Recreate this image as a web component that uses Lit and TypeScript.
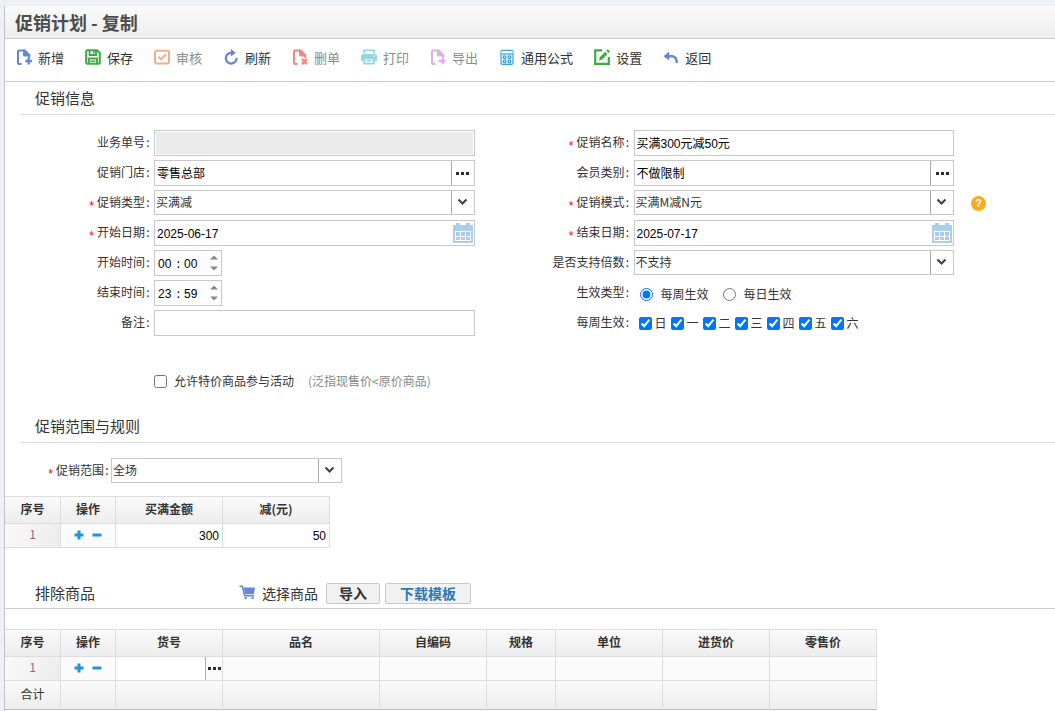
import { LitElement, html, css, svg, nothing, TemplateResult } from "lit";
import { customElement, state } from "lit/decorators.js";
import { classMap } from "lit/directives/class-map.js";

interface Tool {
  text: string;
  icon: TemplateResult;
  color: string;
  off?: boolean;
}

const page = svg`<path d="M5.5 15H3Q2 15 2 14V2.5Q2 1.5 3 1.5H8L13.2 6.5V9" fill="none" stroke="currentColor" stroke-width="2"/><path d="M7 .5H9.2L14.2 5.4V7.4H8.4Q7 7.4 7 6Z"/>`;

const icons = {
  add: svg`${page}<path d="M11.4 8.6H13.8V10.8H16V13.2H13.8V15.4H11.4V13.2H9.2V10.8H11.4Z"/>`,
  save: svg`<path d="M1.2 2.4Q1.2 1.2 2.4 1.2H12L14.8 4V13.6Q14.8 14.8 13.6 14.8H2.4Q1.2 14.8 1.2 13.6Z" fill="none" stroke="currentColor" stroke-width="2.1"/><path d="M4.6 1V6H11V1M4 15V9.5H12V15" fill="none" stroke="currentColor" stroke-width="1.9"/><path d="M8 2H9.6V4.6H8ZM5.5 11.6H10.5V13H5.5Z"/>`,
  audit: svg`<rect x="1" y="1.8" width="14" height="12.6" rx="1.4" fill="none" stroke="currentColor" stroke-width="2"/><path d="M4.4 7.8L7 10.4L12 5.2" fill="none" stroke="currentColor" stroke-width="2"/>`,
  refresh: svg`<path d="M9.5 3.8H8A5.4 5.4 0 1 0 13.6 9" fill="none" stroke="currentColor" stroke-width="2.2"/><path d="M8 0L12.8 3.8L8 7.6Z"/>`,
  remove: svg`${page}<path d="M10 10.2L15 15.2M15 10.2L10 15.2" stroke="currentColor" stroke-width="2.4"/>`,
  print: svg`<path d="M2 .5H14V4.5H12.2V2.2H3.8V4.5H2Z"/><path fill-rule="evenodd" d="M2 5H14Q16 5 16 7V12H13.6V9.5H2.4V12H0V7Q0 5 2 5ZM12.4 6.4V7.8H13.8V6.4Z"/><path d="M3.2 9.2V14.6H12.8V9.2Z" fill="none" stroke="currentColor" stroke-width="1.9"/><path d="M5.5 11H10.5V12.6H5.5Z"/>`,
  export: svg`${page}<path d="M8.5 10.8H11.8V8L16 12L11.8 16V13.2H8.5Z"/>`,
  formula: svg`<rect x="2" y="1.4" width="12" height="14" rx="1.4" fill="#dff2fc" stroke="currentColor" stroke-width="1.2"/><path d="M2.6 2.2H13.4V4.2H2.6Z" fill="#fff"/><path d="M2.6 5H13.4" stroke="currentColor" stroke-width="1.2"/><g fill="#fff" stroke="currentColor" stroke-width="1.3"><circle cx="5.6" cy="8.2" r="1.3"/><circle cx="10.4" cy="8.2" r="1.3"/><circle cx="5.6" cy="12.4" r="1.3"/><circle cx="10.4" cy="12.4" r="1.3"/></g>`,
  setup: svg`<path d="M8.2 1.4H1.2V14.8H14.8V8" fill="none" stroke="currentColor" stroke-width="2.2"/><path d="M5 11.6L5.8 8.2L11.2 2.8L13.4 5L8.2 10.6Z"/><path d="M12.2 1.8L13.8 .2L16 2.4L14.4 4Z"/>`,
  back: svg`<path d="M5 7.2H9.4Q13.6 7.6 13.8 14" fill="none" stroke="currentColor" stroke-width="2.4"/><path d="M.5 7.2L6.2 2.6V11.6Z"/>`,
  cart: svg`<path d="M.5 1.3H3.4L5.6 10.6H15" fill="none" stroke="currentColor" stroke-width="1.6"/><path d="M4.6 2.4H16L14.8 9H6.2Z"/><path d="M5.6 12H7.8V14H5.6ZM12.4 12H14.6V14H12.4Z"/>`,
};

const tools: Tool[] = [
  { text: "新增", icon: icons.add, color: "blue" },
  { text: "保存", icon: icons.save, color: "green" },
  { text: "审核", icon: icons.audit, color: "orange", off: true },
  { text: "刷新", icon: icons.refresh, color: "blue" },
  { text: "删单", icon: icons.remove, color: "red", off: true },
  { text: "打印", icon: icons.print, color: "cyan", off: true },
  { text: "导出", icon: icons.export, color: "violet", off: true },
  { text: "通用公式", icon: icons.formula, color: "sky" },
  { text: "设置", icon: icons.setup, color: "green" },
  { text: "返回", icon: icons.back, color: "blue" },
];

const glyph = (body: unknown, color = "") =>
  html`<svg class="glyph ${color}" viewBox="0 0 16 16" fill="currentColor" aria-hidden="true">${body}</svg>`;

const calendar = html`<svg class="calendar" viewBox="0 0 20 20" aria-hidden="true">
  <path fill="#abcfea" d="M0 2H3V0H7V2H13V0H17V2H20V20H0Z" />
  <path fill="#fff" d="M2 8H18V18H2Z" />
  <path fill="#abcbe6" d="M3 9h4v4H3zM8 9h4v4H8zM13 9h4v4h-4zM3 14h4v3H3zM8 14h4v3H8zM13 14h4v3h-4z" />
</svg>`;

const dots = html`<svg class="dots" viewBox="0 0 13 3" aria-hidden="true">
  <path fill="#2f2a3a" d="M0 0h3v3H0zM5 0h3v3H5zM10 0h3v3h-3z" />
</svg>`;

@customElement("app-root")
export class AppRoot extends LitElement {
  @state() private cycle = "week";

  static styles = css`
    :host {
      display: block;
      box-sizing: border-box;
      min-height: 100vh;
      padding: 6px 0 0 4px;
      background: #eff0f5;
      color: #333;
      font: 12px/16px "Noto Sans CJK SC", sans-serif;
    }
    *, *::before { box-sizing: border-box; }
    button, input, select { font: inherit; color: inherit; margin: 0; }
    button { padding: 0; border: 0; background: none; cursor: pointer; }
    svg { display: block; }
    .panel {
      min-height: calc(100vh - 6px);
      border-left: 1px solid #c4c4c4;
      background: #fff;
    }
    .titlebar {
      padding: 4px 10px;
      border-bottom: 1px solid #ccc;
      background: linear-gradient(#fafafa, #ededed);
    }
    h1 { margin: 0; font-size: 18px; line-height: 24px; color: #4d4d4d; }
    .toolbar {
      display: flex;
      flex-wrap: wrap;
      gap: 0 21px;
      padding: 8px 11px 13px;
      border-bottom: 1px solid #ccc;
    }
    .tool {
      display: flex;
      align-items: flex-start;
      gap: 6px;
      font-size: 13px;
      line-height: 21px;
    }
    .tool .glyph { margin-top: 2px; }
    .tool.off { color: #8c8c8c; }
    .glyph { width: 16px; height: 16px; flex: none; }
    .blue { color: #6787d6; }
    .green { color: #3fa945; }
    .orange { color: #f5ae84; }
    .red { color: #f18686; }
    .cyan { color: #93d6df; }
    .violet { color: #dfaee6; }
    .tool .sky { color: #3ea3dc; }
    h2 { margin: 0; font-size: 15px; line-height: 20px; font-weight: 400; }
    .section {
      margin-left: 15px;
      padding: 6px 15px;
      border-bottom: 1px solid #ddd;
    }
    .form {
      display: grid;
      grid-template-columns: 149px 1fr 159px 1fr 101px;
      grid-auto-rows: 26px;
      gap: 4px 0;
      padding-top: 15px;
    }
    .label {
      padding-right: 3px;
      text-align: right;
      line-height: 24px;
      white-space: nowrap;
    }
    .mark { display: inline-block; width: 6px; text-align: center; }
    .star {
      display: inline-block;
      height: 20px;
      margin-right: 3px;
      color: #f00;
      font-family: "Liberation Sans", sans-serif;
      vertical-align: middle;
    }
    .box {
      display: flex;
      height: 26px;
      border: 1px solid #c8c8c8;
      background: #fff;
    }
    .box input {
      flex: 1;
      width: 0;
      min-width: 0;
      padding: 2px 2px 0;
      border: 0;
      outline: 0;
      background: none;
      color: #000;
      font-family: "Liberation Sans", "Noto Sans CJK SC", sans-serif;
    }
    .box input:disabled { background: #ebebeb; border: 1px solid #fff; }
    .more {
      width: 23px;
      border-left: 1px solid #aaa;
      display: grid;
      place-items: center;
    }
    .dots { width: 13px; height: 3px; }
    .day { padding: 0 1px; display: grid; place-items: center; }
    .calendar { width: 20px; height: 20px; }
    .pick { position: relative; height: 25px; }
    .pick select {
      appearance: none;
      width: 100%;
      height: 25px;
      padding: 0 24px 2px 1px;
      border: 1px solid #c8c8c8;
      border-radius: 0;
      background: #fff;
    }
    .pick svg {
      position: absolute;
      top: 1px;
      right: 1px;
      width: 23px;
      height: 23px;
      border-left: 1px solid #aaa;
      pointer-events: none;
    }
    .box.time { width: 68px; align-items: center; padding: 0 3px 0 3px; color: #000; }
    .box.time input { flex: none; width: 15px; padding: 2px 0 0; }
    .colon { width: 11px; text-align: center; }
    .spin { display: grid; gap: 6px; margin-left: auto; }
    .spin svg { width: 8px; height: 5px; }
    .help {
      justify-self: start;
      align-self: center;
      width: 15px;
      height: 15px;
      margin-left: 17px;
      border-radius: 50%;
      background: #fbaa19;
      color: #fff;
      font: bold 11px/15px "Liberation Sans", sans-serif;
    }
    .choices { display: flex; align-items: center; }
    .choices label { display: flex; align-items: center; }
    .choices input { width: 13px; height: 13px; }
    .cycle { gap: 14px; padding: 2px 0 0 6px; }
    .cycle label { gap: 8px; }
    .week { gap: 4px; padding-left: 5px; }
    .week label { gap: 3px; }
    .special { gap: 14px; padding: 32px 0 16px 149px; line-height: 26px; }
    .special label { gap: 7px; }
    .hint { color: #888; }
    .scope {
      display: grid;
      grid-template-columns: 106px 231px;
      padding: 15px 0 13px;
    }
    .scope .label { padding-right: 1px; }
    .grid {
      table-layout: fixed;
      border-spacing: 0;
      border-top: 1px solid #ddd;
    }
    .rules { width: 325px; }
    .goods { width: 872px; }
    .w56 { width: 56px; }
    .w55 { width: 55px; }
    .w69 { width: 69px; }
    .w107 { width: 107px; }
    .w157 { width: 157px; }
    .grid th, .grid td {
      padding: 0;
      height: 24px;
      border: solid #ddd;
      border-width: 0 1px 1px 0;
      background: #fbfbfb;
      text-align: center;
    }
    .grid thead th { height: 27px; padding-bottom: 3px; background: linear-gradient(#fafafa, #ededed); }
    .grid .no { padding-bottom: 3px; background: linear-gradient(100deg, #f9f9f9, #ededed); color: #777; }
    .grid tfoot td {
      height: 29px;
      padding-bottom: 2px;
      background: linear-gradient(#fafafa, #ededed);
      border-bottom-color: #bbb;
    }
    .ops { display: flex; justify-content: center; gap: 8px; padding-bottom: 2px; }
    .ops svg { width: 10px; height: 10px; }
    .cell { display: flex; height: 23px; padding-left: 3px; }
    .cell input {
      flex: 1;
      width: 0;
      min-width: 0;
      padding: 1px 3px 0;
      border: 0;
      outline: 0;
      background: #fff;
      color: #000;
      text-align: right;
      font-family: "Liberation Sans", sans-serif;
    }
    .cell .more { width: 17px; }
    .exclude {
      display: flex;
      align-items: center;
      margin-top: 30px;
      padding: 5px 30px 4px;
      border-bottom: 1px solid #ccc;
    }
    .exclude h2 { flex: 0 0 204px; padding-bottom: 1px; }
    .choose { display: flex; align-items: center; gap: 7px; padding-bottom: 1px; font-size: 14px; line-height: 20px; }
    .flat {
      height: 21px;
      margin-left: 5px;
      border: 1px solid #c8c8c8;
      border-radius: 2px;
      background: #f1f1f1;
      font-size: 14px;
      line-height: 19px;
      font-weight: 700;
    }
    .choose + .flat { margin-left: 8px; }
    .narrow { width: 54px; }
    .wide { width: 86px; color: #2a7ab5; }
    .goods { margin-top: 20px; }
  `;

  private label(id: string, text: string, required = false) {
    return html`<label class="label" for=${id}>${required ? html`<span class="star">*</span>` : nothing}${text}<span class="mark">:</span></label>`;
  }

  private text(id: string, value = "", disabled = false) {
    return html`<div class="box"><input id=${id} type="text" .value=${value} ?disabled=${disabled} /></div>`;
  }

  private lookup(id: string, value: string) {
    return html`<div class="box">
      <input id=${id} type="text" .value=${value} />
      <button class="more" type="button" aria-label="选择">${dots}</button>
    </div>`;
  }

  private date(id: string, value: string) {
    return html`<div class="box">
      <input id=${id} type="text" .value=${value} />
      <button class="day" type="button" aria-label="选择日期">${calendar}</button>
    </div>`;
  }

  private pick(id: string, value: string) {
    return html`<div class="pick">
      <select id=${id}><option>${value}</option></select>
      <svg viewBox="0 0 22 23" aria-hidden="true">
        <path d="M6.5 8.5L10.5 12.5L14.5 8.5" fill="none" stroke="#444" stroke-width="2.2" />
      </svg>
    </div>`;
  }

  private time(id: string, hour: string, minute: string) {
    return html`<div class="box time">
      <input id=${id} type="text" .value=${hour} />
      <span class="colon">:</span>
      <input type="text" aria-label="分钟" .value=${minute} />
      <span class="spin">
        <button type="button" aria-label="增加"><svg viewBox="0 0 8 5"><path fill="#888" d="M0 4.5L4 .5L8 4.5Z" /></svg></button>
        <button type="button" aria-label="减少"><svg viewBox="0 0 8 5"><path fill="#888" d="M0 .5L4 4.5L8 .5Z" /></svg></button>
      </span>
    </div>`;
  }

  private ops() {
    return html`<div class="ops">
      <button type="button" aria-label="增行"><svg viewBox="0 0 10 10"><path fill="#2193dc" d="M3.5 .5h3v3H9.5v3H6.5v3h-3v-3H.5v-3h3Z" /></svg></button>
      <button type="button" aria-label="删行"><svg viewBox="0 0 10 10"><path fill="#2193dc" d="M.5 3.5h9v3h-9Z" /></svg></button>
    </div>`;
  }

  private radio(value: string, text: string) {
    return html`<label><input type="radio" name="cycle" .checked=${this.cycle === value}
      @change=${() => (this.cycle = value)} />${text}</label>`;
  }

  render() {
    return html`<main class="panel">
      <header class="titlebar"><h1>促销计划 - 复制</h1></header>
      <nav class="toolbar">
        ${tools.map(
          (t) => html`<button type="button" class=${classMap({ tool: true, off: !!t.off })}>${glyph(t.icon, t.color)}${t.text}</button>`
        )}
      </nav>

      <div class="section"><h2>促销信息</h2></div>
      <div class="form">
        ${this.label("bill", "业务单号")}${this.text("bill", "", true)}
        ${this.label("name", "促销名称", true)}${this.text("name", "买满300元减50元")}<span></span>
        ${this.label("store", "促销门店")}${this.lookup("store", "零售总部")}
        ${this.label("member", "会员类别")}${this.lookup("member", "不做限制")}<span></span>
        ${this.label("type", "促销类型", true)}${this.pick("type", "买满减")}
        ${this.label("mode", "促销模式", true)}${this.pick("mode", "买满M减N元")}
        <button class="help" type="button">?</button>
        ${this.label("from", "开始日期", true)}${this.date("from", "2025-06-17")}
        ${this.label("to", "结束日期", true)}${this.date("to", "2025-07-17")}<span></span>
        ${this.label("start", "开始时间")}${this.time("start", "00", "00")}
        ${this.label("multi", "是否支持倍数")}${this.pick("multi", "不支持")}<span></span>
        ${this.label("end", "结束时间")}${this.time("end", "23", "59")}
        <span class="label">生效类型<span class="mark">:</span></span>
        <div class="choices cycle">${this.radio("week", "每周生效")}${this.radio("day", "每日生效")}</div><span></span>
        ${this.label("memo", "备注")}${this.text("memo")}
        <span class="label">每周生效<span class="mark">:</span></span>
        <div class="choices week">
          ${[..."日一二三四五六"].map((d) => html`<label><input type="checkbox" checked />${d}</label>`)}
        </div>
      </div>
      <div class="choices special">
        <label><input type="checkbox" />允许特价商品参与活动</label>
        <span class="hint">(泛指现售价&lt;原价商品)</span>
      </div>

      <div class="section"><h2>促销范围与规则</h2></div>
      <div class="scope">${this.label("scope", "促销范围", true)}${this.pick("scope", "全场")}</div>
      <table class="grid rules">
        <thead>
          <tr><th class="w56">序号</th><th class="w55">操作</th><th class="w107">买满金额</th><th class="w107">减(元)</th></tr>
        </thead>
        <tbody>
          <tr>
            <td class="no">1</td>
            <td>${this.ops()}</td>
            <td><div class="cell"><input type="text" aria-label="买满金额" .value=${"300"} /></div></td>
            <td><div class="cell"><input type="text" aria-label="减(元)" .value=${"50"} /></div></td>
          </tr>
        </tbody>
      </table>

      <div class="exclude">
        <h2>排除商品</h2>
        <button class="choose" type="button">${glyph(icons.cart, "blue")}选择商品</button>
        <button class="flat narrow" type="button">导入</button>
        <button class="flat wide" type="button">下载模板</button>
      </div>
      <table class="grid goods">
        <thead>
          <tr>
            <th class="w56">序号</th><th class="w55">操作</th><th class="w107">货号</th><th class="w157">品名</th>
            <th class="w107">自编码</th><th class="w69">规格</th><th class="w107">单位</th><th class="w107">进货价</th><th class="w107">零售价</th>
          </tr>
        </thead>
        <tbody>
          <tr>
            <td class="no">1</td>
            <td>${this.ops()}</td>
            <td><div class="cell"><input type="text" aria-label="货号" /><button class="more" type="button" aria-label="选择商品">${dots}</button></div></td>
            ${[1, 2, 3, 4, 5, 6].map(() => html`<td></td>`)}
          </tr>
        </tbody>
        <tfoot>
          <tr><td>合计</td>${[1, 2, 3, 4, 5, 6, 7, 8].map(() => html`<td></td>`)}</tr>
        </tfoot>
      </table>
    </main>`;
  }
}
